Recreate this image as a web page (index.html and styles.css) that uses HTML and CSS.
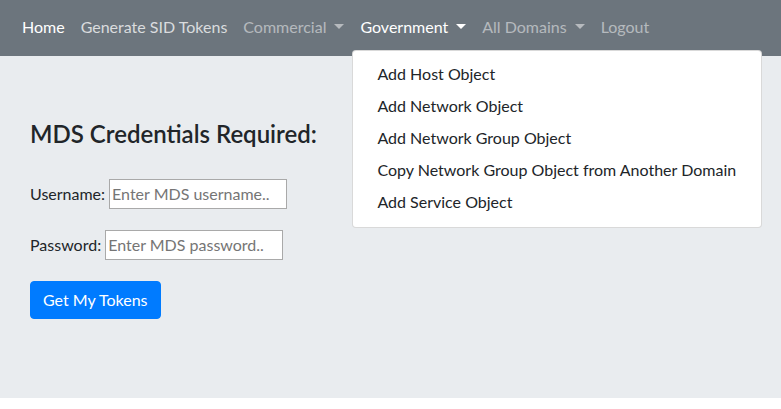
FILE: index.html
```html
<!DOCTYPE html>
<html lang="en">
<head>
<meta charset="utf-8">
<title>MDS Tokens</title>
<link rel="stylesheet" href="styles.css">
</head>
<body>
<nav class="navbar">
  <ul class="nav">
    <li class="nav-item"><a class="nav-link active" href="#">Home</a></li>
    <li class="nav-item"><a class="nav-link hover" href="#">Generate SID Tokens</a></li>
    <li class="nav-item"><a class="nav-link toggle" href="#">Commercial</a></li>
    <li class="nav-item">
      <a class="nav-link toggle active" href="#">Government</a>
      <div class="dropdown-menu">
        <a class="dropdown-item" href="#">Add Host Object</a>
        <a class="dropdown-item" href="#">Add Network Object</a>
        <a class="dropdown-item" href="#">Add Network Group Object</a>
        <a class="dropdown-item" href="#">Copy Network Group Object from Another Domain</a>
        <a class="dropdown-item" href="#">Add Service Object</a>
      </div>
    </li>
    <li class="nav-item"><a class="nav-link toggle" href="#">All Domains</a></li>
    <li class="nav-item"><a class="nav-link" href="#">Logout</a></li>
  </ul>
</nav>
<main class="jumbotron">
  <h4 class="title">MDS Credentials Required:</h4>
  <form class="form">
    <div class="row"><label class="label" for="u">Username:</label><input id="u" class="field" type="text" placeholder="Enter MDS username.."></div>
    <div class="row"><label class="label" for="p">Password:</label><input id="p" class="field" type="password" placeholder="Enter MDS password.."></div>
    <button class="btn" type="button">Get My Tokens</button>
  </form>
</main>
</body>
</html>
```

FILE: styles.css
```css
* { box-sizing: border-box; }
html, body { margin: 0; padding: 0; }
body {
  font-family: Lato, "Open Sans", "Noto Sans", sans-serif;
  font-size: 16px;
  line-height: 1.5;
  color: #212529;
  background: #fff;
}
.navbar {
  background: #6c757d;
  height: 56px;
  padding: 8px 16px 8px 14px;
}
.nav {
  display: flex;
  list-style: none;
  margin: 0;
  padding: 0;
}
.nav-item { position: relative; }
.nav-link {
  display: block;
  padding: 7px 8px 9px;
  line-height: 24px;
  color: rgba(255,255,255,.5);
  text-decoration: none;
  white-space: nowrap;
}
.nav-link.hover { color: rgba(255,255,255,.75); }
.nav-link.active { color: #fff; }
.nav-link.toggle::after {
  content: "";
  display: inline-block;
  margin-left: 8px;
  vertical-align: 4px;
  border-top: 5px solid;
  border-left: 5px solid transparent;
  border-right: 5px solid transparent;
}
.dropdown-menu {
  position: absolute;
  top: 100%;
  left: 0;
  margin-top: 2px;
  width: 410px;
  padding: 8px 0;
  background: #fff;
  border: 1px solid rgba(0,0,0,.15);
  border-radius: 4px;
  z-index: 10;
}
.dropdown-item {
  display: block;
  padding: 3px 24px 5px;
  line-height: 24px;
  color: #212529;
  text-decoration: none;
  white-space: nowrap;
}
.jumbotron {
  background: #e9ecef;
  padding: 64px 30px 79px;
}
.title {
  margin: 0 0 30px;
  font-size: 24px;
  font-weight: 600;
  line-height: 1.2;
}
.form {
  display: flex;
  flex-direction: column;
  align-items: flex-start;
  gap: 21px;
}
.row {
  display: flex;
  align-items: center;
  gap: 4px;
}
.field {
  width: 178px;
  height: 30px;
  padding: 1px 2px;
  border: 1px solid #a9a9a9;
  background: #fff;
  font: inherit;
  color: #212529;
}
.field::placeholder { color: #757575; }
.btn {
  height: 38px;
  padding: 6px 12px;
  border: 1px solid #007bff;
  border-radius: 4px;
  background: #007bff;
  color: #fff;
  font: inherit;
  line-height: 24px;
}
```
